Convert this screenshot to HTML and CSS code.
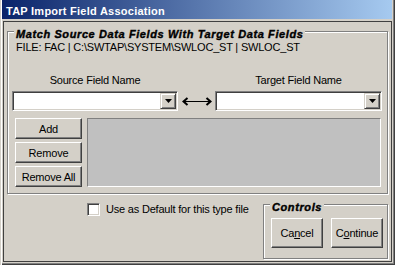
FILE: index.html
```html
<!DOCTYPE html>
<html lang="en">
<head>
    <meta charset="UTF-8">
    <title>TAP Import Field Association</title>
    <link rel="stylesheet" href="styles.css">
</head>
<body>
    <div class="window">
        <div class="titlebar">TAP Import Field Association</div>
        <div class="client">
            <div class="group main-group">
                <div class="group-title">Match Source Data Fields With Target Data Fields</div>
                <div class="file-path">FILE: FAC | C:\SWTAP\SYSTEM\SWLOC_ST | SWLOC_ST</div>

                <div class="field-row labels">
                    <span>Source Field Name</span>
                    <span></span>
                    <span>Target Field Name</span>
                </div>
                <div class="field-row combos">
                    <div class="combo" id="source">
                        <span class="combo-btn">
                            <svg width="7" height="4" viewBox="0 0 7 4"><polygon points="0,0 7,0 3.5,4" fill="#000"/></svg>
                        </span>
                    </div>
                    <svg class="link-arrow" width="30" height="11" viewBox="0 0 30 11">
                        <line x1="2" y1="5.5" x2="28" y2="5.5" stroke="#000" stroke-width="1"/>
                        <polyline points="5.5,2 1.5,5.5 5.5,9" fill="none" stroke="#000" stroke-width="2"/>
                        <polyline points="24.5,2 28.5,5.5 24.5,9" fill="none" stroke="#000" stroke-width="2"/>
                    </svg>
                    <div class="combo" id="target">
                        <span class="combo-btn">
                            <svg width="7" height="4" viewBox="0 0 7 4"><polygon points="0,0 7,0 3.5,4" fill="#000"/></svg>
                        </span>
                    </div>
                </div>

                <div class="mapping">
                    <div class="btn-col">
                        <button class="btn">Add</button>
                        <button class="btn">Remove</button>
                        <button class="btn">Remove All</button>
                    </div>
                    <div class="map-list"></div>
                </div>
            </div>

            <div class="bottom">
                <label class="check"><span class="check-box"></span>Use as Default for this type file</label>
                <div class="group controls">
                    <div class="group-title">Controls</div>
                    <div class="ctl-buttons">
                        <button class="btn">Ca<u>n</u>cel</button>
                        <button class="btn">C<u>o</u>ntinue</button>
                    </div>
                </div>
            </div>
        </div>
    </div>
</body>
</html>
```

FILE: styles.css
```css
* {
    box-sizing: border-box;
}

body {
    margin: 0;
    background: #d4d0c8;
    font-family: "Liberation Sans", Arial, sans-serif;
    font-size: 11px;
    letter-spacing: -0.2px;
    color: #000;
}

.window {
    width: 395px;
    height: 265px;
    padding: 0 3px 3px 2px;
    box-shadow: inset 1px 0 #d4d0c8, inset 2px 0 #fff, inset -1px -1px #404040, inset -2px -2px #808080;
}

.titlebar {
    height: 19px;
    padding: 5px 0 0 4px;
    line-height: 13px;
    font-weight: bold;
    letter-spacing: 0.25px;
    color: #fff;
    background: linear-gradient(to right, #0a246a, #a6caf0);
}

.client {
    margin: 2px 0 0 1px;
    height: 241px;
    border: 1px solid #404040;
}

/* etched group frame */
.group {
    border: 1px solid #808080;
    box-shadow: inset 1px 1px #fff, 1px 1px #fff;
}

.group-title {
    display: block;
    width: max-content;
    margin: -4px 0 0 2px;
    padding: 0 2px;
    background: #d4d0c8;
    font-weight: bold;
    font-style: italic;
    letter-spacing: 0.6px;
    line-height: 13px;
    -webkit-text-stroke: 0.4px #000;
}

.main-group {
    margin: 9px 3px 0;
    padding: 0 5px 6px 4px;
}

.file-path {
    padding-left: 4px;
    line-height: 13px;
}

.field-row {
    display: grid;
    grid-template-columns: 166px 37px 167px;
}

.labels {
    margin-top: 20px;
    line-height: 13px;
    text-align: center;
}

.combos {
    margin-top: 4px;
    height: 20px;
    align-items: center;
}

.combo {
    display: flex;
    justify-content: flex-end;
    height: 20px;
    padding: 1px;
    background: #fff;
    border: 1px solid;
    border-color: #808080 #fff #fff #808080;
    box-shadow: inset 1px 1px #404040, inset -1px -1px #d4d0c8;
}

.combo-btn {
    display: flex;
    align-items: center;
    justify-content: center;
    width: 16px;
    height: 16px;
    background: #d4d0c8;
    border: 1px solid;
    border-color: #d4d0c8 #404040 #404040 #d4d0c8;
    box-shadow: inset 1px 1px #fff, inset -1px -1px #808080;
}

.link-arrow {
    justify-self: center;
}

.mapping {
    display: flex;
    margin-top: 7px;
    height: 69px;
}

.btn-col {
    display: flex;
    flex-direction: column;
    gap: 3px;
    width: 67px;
    margin-left: 3px;
}

.btn {
    height: 21px;
    padding: 0;
    font: inherit;
    letter-spacing: inherit;
    color: #000;
    background: #d4d0c8;
    border: 1px solid;
    border-color: #fff #404040 #404040 #fff;
    box-shadow: inset -1px -1px #808080;
}

.map-list {
    flex: 1;
    margin: 0 1px 0 5px;
    background: #c0c0c0;
    border: 1px solid;
    border-color: #808080 #fff #fff #808080;
}

.bottom {
    display: flex;
    align-items: flex-start;
}

.check {
    display: flex;
    align-items: center;
    gap: 6px;
    margin: 9px 0 0 83px;
    line-height: 13px;
}

.check-box {
    width: 13px;
    height: 13px;
    background: #fff;
    border: 1px solid;
    border-color: #808080 #fff #fff #808080;
    box-shadow: inset 1px 1px #404040, inset -1px -1px #d4d0c8;
}

.controls {
    width: 125px;
    margin: 10px 3px 0 auto;
    padding: 0 4px 10px 7px;
}

.controls .group-title {
    margin-left: -1px;
}

.ctl-buttons {
    display: flex;
    gap: 8px;
    margin-top: 4px;
}

.ctl-buttons .btn {
    width: 52px;
    height: 30px;
}
```
